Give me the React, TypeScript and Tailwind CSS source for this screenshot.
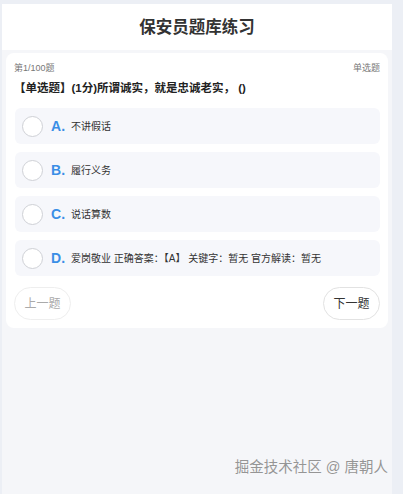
const options = [
  { key: 'A', text: '不讲假话' },
  { key: 'B', text: '履行义务' },
  { key: 'C', text: '说话算数' },
  { key: 'D', text: '爱岗敬业 正确答案：【A】 关键字：暂无 官方解读：暂无' },
];

export default function App() {
  return (
    <div
      className="relative flex h-[494px] w-full bg-[#eceff5]"
      style={{ fontFamily: '"Liberation Sans", "Noto Sans CJK SC", sans-serif' }}
    >
      <div className="ml-[2px] mt-[4px] flex w-[390px] flex-col bg-[#f5f6f9]">
        <div className="flex h-[46px] items-center justify-center bg-white">
          <h1 className="text-[16.5px] font-bold text-[#333]">保安员题库练习</h1>
        </div>

        <div className="mx-[4px] mt-[3px] rounded-lg bg-white px-[8px] pb-[8px] pt-[9px]">
          <div className="flex justify-between text-[9px] leading-[12px] text-[#777]">
            <span>第1/100题</span>
            <span>单选题</span>
          </div>
          <p className="mt-[7px] text-[11.5px] font-bold leading-[14px] text-[#222]">
            【单选题】(1分)所谓诚实，就是忠诚老实， ()
          </p>

          <div className="mt-[13px] flex flex-col gap-[8px] pl-[1px]">
            {options.map((o) => (
              <div
                key={o.key}
                className="flex h-[36px] items-center rounded-md bg-[#f6f7fb] pl-[7px]"
              >
                <span className="h-[21px] w-[21px] rounded-full border border-[#cfd1d6] bg-white" />
                <span className="ml-[8px] text-[14px] font-bold text-[#3a8ee6]">{o.key}.</span>
                <span className="ml-[6px] text-[10px] text-[#333]">{o.text}</span>
              </div>
            ))}
          </div>

          <div className="mt-[11px] flex justify-between">
            <button className="h-[33px] w-[57px] rounded-full border border-[#eeeeee] text-[12px] text-[#aaa]">
              上一题
            </button>
            <button className="h-[33px] w-[57px] rounded-full border border-[#e2e2e2] text-[12px] text-[#333]">
              下一题
            </button>
          </div>
        </div>
      </div>

      <div
        className="absolute bottom-[15px] right-[15px] text-[14.5px] text-[#959595]"
        style={{ textShadow: '0 0 1px #fff' }}
      >
        掘金技术社区 @ 唐朝人
      </div>
    </div>
  );
}
